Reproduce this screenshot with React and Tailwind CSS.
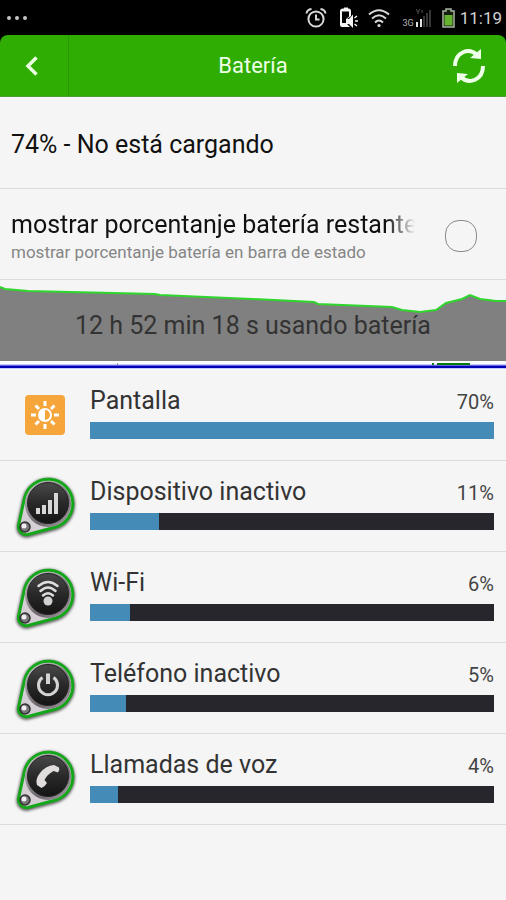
const usage = [
  { name: "Pantalla", percent: 70, fill: 100, icon: "screen" },
  { name: "Dispositivo inactivo", percent: 11, fill: 17, icon: "signal" },
  { name: "Wi-Fi", percent: 6, fill: 10, icon: "wifi" },
  { name: "Teléfono inactivo", percent: 5, fill: 9, icon: "power" },
  { name: "Llamadas de voz", percent: 4, fill: 7, icon: "phone" },
];

const StatusBar = () => {
  return (
    <div className="flex items-center justify-between h-[35px] pl-[7px] pr-1 bg-black">
      <div className="flex gap-1">
        <span className="w-1 h-1 rounded-full bg-[#c4c4c4]"></span>
        <span className="w-1 h-1 rounded-full bg-[#c4c4c4]"></span>
        <span className="w-1 h-1 rounded-full bg-[#c4c4c4]"></span>
      </div>
      <div className="flex items-center">
        {/* Alarm */}
        <svg className="mr-3" width="22" height="22" viewBox="0 0 22 22" fill="none" stroke="#d8d8d8" strokeWidth="2">
          <circle cx="11" cy="12" r="7.6" />
          <path d="M11 7.5V12.5H14.5" />
          <path d="M1.5 6.5Q2 2.5 6.5 2M20.5 6.5Q20 2.5 15.5 2" />
        </svg>
        {/* Phone with sound */}
        <svg className="mr-[9px]" width="20" height="22" viewBox="0 0 20 22">
          <path d="M4 1.5H5V0.5H9V1.5H10Q12 1.5 12 4V9L8 12V17L11 20H3Q1 20 1 18V4Q1 1.5 4 1.5Z" fill="#f4f4f4" />
          <path d="M3 4.5H10V9.5L7 12V16H3Z" fill="#000" />
          <path d="M7 12H10L14 7.5V21L10 17H7Z" fill="#f4f4f4" />
          <path d="M15.5 11L18 9M16 14H19M15.5 17L18 19" stroke="#f4f4f4" strokeWidth="1.5" />
        </svg>
        {/* Wifi */}
        <svg className="mr-3" width="22" height="20" viewBox="0 0 22 20" fill="none" stroke="#d8d8d8" strokeWidth="2">
          <path d="M1 6.5Q11 -2 21 6.5" />
          <path d="M4 10.5Q11 4 18 10.5" />
          <path d="M7 14.5Q11 10.5 15 14.5" />
          <circle cx="11" cy="17.5" r="1.6" fill="#d8d8d8" stroke="none" />
        </svg>
        {/* Mobile signal */}
        <div className="flex items-end h-5 mr-[10px]">
          <span className="text-[9px] leading-[9px] text-[#b5b5b5]">3G</span>
          <svg width="18" height="20" viewBox="0 0 18 20">
            <path d="M2 1L4 4L6 1M4 4V6M8 2V5" stroke="#555" fill="none" />
            <path d="M2 14H4V19H2ZM6 11H8V19H6Z" fill="#e4e4e4" />
            <path d="M9 8H11V19H9ZM12 5H14V19H12ZM15 2H17V19H15Z" fill="#363636" />
          </svg>
        </div>
        {/* Battery */}
        <svg className="mr-[5px]" width="13" height="20" viewBox="0 0 13 20">
          <path d="M4 3V1H9V3H12V19H1V3Z" fill="#172010" stroke="#a9b5a1" strokeWidth="1.5" />
          <path d="M2.5 7H10.5V17.5H2.5Z" fill="#65b231" />
        </svg>
        <span className="text-[17px] leading-5 text-[#d0d0d0]">11:19</span>
      </div>
    </div>
  );
};

const Header = () => {
  return (
    <div className="bg-black">
      <header className="grid grid-cols-[69px_1fr_69px] h-[62px] rounded-t-lg bg-[#2fad02] border-b border-[#4f9d35]">
        <button
          type="button"
          aria-label="Atrás"
          className="flex items-center justify-center pr-1 border-r border-[#289702]"
        >
          <svg width="14" height="20" viewBox="0 0 14 20" fill="none" stroke="#e9ffe1" strokeWidth="3.5">
            <path d="M11.5 1.5L3 10L11.5 18.5" />
          </svg>
        </button>
        <h1 className="self-center text-center text-[22px] leading-7 text-[#edffe7]">
          Batería
        </h1>
        <button type="button" aria-label="Actualizar" className="flex items-center justify-center pr-[6px]">
          <svg width="34" height="36" viewBox="0 0 34 36">
            <path d="M3 18C3 4 17 -1 25 7" fill="none" stroke="#edffe7" strokeWidth="4" />
            <path d="M29 1V11L18 10Z" fill="#edffe7" />
            <path d="M31 18C31 32 17 37 9 29" fill="none" stroke="#edffe7" strokeWidth="4" />
            <path d="M5 35V25L16 26Z" fill="#edffe7" />
          </svg>
        </button>
      </header>
    </div>
  );
};

const BatteryChart = () => {
  return (
    <div className="grid h-[90px]">
      <svg className="col-start-1 row-start-1 w-full h-[90px]" viewBox="0 0 506 90" preserveAspectRatio="none">
        <path
          d="M0 7L5 9L28 11L155 14L160 15L252 19L314 22L318 24L392 27L402 30L420 32L436 30L446 23L462 19L470 15L480 19L496 21H506V81H0Z"
          fill="#808080"
        />
        <path
          d="M0 7L5 9L28 11L155 14L160 15L252 19L314 22L318 24L392 27L402 30L420 32L436 30L446 23L462 19L470 15L480 19L496 21H506"
          fill="none"
          stroke="#2fd62d"
          strokeWidth="2"
        />
        <path d="M0 81H506V90H0Z" fill="#fbfbfb" />
        <path d="M0 84H506V89H0Z" fill="#c4c4ff" />
        <path d="M117 83H118V85H117Z" fill="#999" />
        <path d="M432 83H434V85H432ZM437 83H470V85H437Z" fill="#087a12" />
        <path d="M0 85.500H506V88H0Z" fill="#0000b5" />
      </svg>
      <p className="col-start-1 row-start-1 self-center justify-self-center pt-[2px] text-[25px] leading-8 text-[#333]">
        12 h 52 min 18 s usando batería
      </p>
    </div>
  );
};

const ScreenIcon = () => {
  return (
    <svg width="60" height="64" viewBox="0 0 60 64">
      <rect x="9" y="12" width="40" height="40" rx="4" fill="#f5a53a" />
      <path
        d="M29 18V23M29 41V46M15 32H20M38 32H43M19.500 22.500L23 26M35 38L38.500 41.500M38.500 22.500L35 26M23 38L19.500 41.500"
        stroke="#fff"
        strokeWidth="3"
      />
      <circle cx="29" cy="32" r="6" fill="#f5a53a" stroke="#fff" strokeWidth="2" />
      <path d="M29 26A6 6 0 0 0 29 38Z" fill="#fff" />
    </svg>
  );
};

const glyphs = {
  signal: (
    <path d="M20 34H24V40H20ZM26 31H30V40H26ZM32 26H36V40H32ZM38 19H42V40H38Z" fill="#d7d7d7" />
  ),
  wifi: (
    <g fill="none" stroke="#dedede" strokeWidth="2.5" strokeLinecap="round">
      <path d="M22.5 21Q32 13 41.5 21M24.5 26Q32 19 39.500 26M27 30.500Q32 26 37 30.500" />
      <circle cx="32" cy="36" r="4.5" fill="#d2d2d2" stroke="none" />
    </g>
  ),
  power: (
    <g fill="none" stroke="#d4d4d4" strokeWidth="3">
      <path d="M26.500 21.500A9.500 9.500 0 1 0 37.500 21.500" />
      <path d="M32 17.500V28" strokeWidth="4" />
    </g>
  ),
  phone: (
    <path
      d="M38 18L43 20.500Q44 22.500 42 25.500L37.500 24Q31 27.500 28.500 33L31 36Q29 39.500 25.500 41L21 38Q19 32 24 26Q30 18.500 38 18Z"
      fill="#e2dddd"
    />
  ),
};

/* Dark round button inside a green drop, with a small stud at its tip */
const BadgeIcon = ({ type }) => {
  const drop =
    "M8.5 24A24.500 24.500 0 1 1 38 53.500L12 60.500A8 8 0 0 1 2.500 51.500Z";

  return (
    <svg className="overflow-visible" width="60" height="64" viewBox="0 0 60 64">
      <defs>
        <linearGradient id={`disc-${type}`} x1="0" y1="0" x2="0" y2="1">
          <stop offset="0" stopColor="#4a4a4a" />
          <stop offset="0.5" stopColor="#292929" />
          <stop offset="1" stopColor="#141414" />
        </linearGradient>
        <linearGradient id={`rim-${type}`} x1="0" y1="0" x2="1" y2="1">
          <stop offset="0" stopColor="#c4c4c4" />
          <stop offset="0.6" stopColor="#6c656c" />
          <stop offset="1" stopColor="#aaa2aa" />
        </linearGradient>
        <filter id={`shade-${type}`} x="-20%" y="-20%" width="140%" height="140%">
          <feGaussianBlur stdDeviation="1.5" />
        </filter>
      </defs>
      <path d={drop} transform="translate(0 1)" fill="none" stroke="#555" strokeWidth="4" filter={`url(#shade-${type})`} />
      <path d={drop} fill="#d5cfd5" stroke="#13a719" strokeWidth="3" />
      <circle cx="32" cy="30" r="23" fill={`url(#rim-${type})`} />
      <circle cx="32" cy="29" r="20.5" fill={`url(#disc-${type})`} stroke="#252525" />
      <circle cx="9" cy="53" r="5" fill="#777" stroke="#303030" strokeWidth="1.5" />
      <circle cx="8" cy="52" r="2.5" fill="#f3eef3" />
      {glyphs[type]}
    </svg>
  );
};

const UsageRow = ({ item }) => {
  return (
    <li className="flex h-[91px] pl-4 pr-3 gap-[14px] border-b border-[#dcdcdc]">
      <div className="shrink-0 pt-[13px]">
        {item.icon === "screen" ? <ScreenIcon /> : <BadgeIcon type={item.icon} />}
      </div>
      <div className="flex-1 pt-[15px]">
        <div className="flex items-baseline justify-between h-[37px]">
          <span className="text-[25px] leading-8 text-[#333]">{item.name}</span>
          <span className="text-[20px] leading-8 text-[#444]">{item.percent}%</span>
        </div>
        <div className="h-[17px] bg-[#26262c]">
          <div className="h-full bg-[#448cb7]" style={{ width: `${item.fill}%` }}></div>
        </div>
      </div>
    </li>
  );
};

const App = () => {
  return (
    <div className="min-h-screen bg-[#f5f5f5] font-[Roboto,sans-serif]">
      <StatusBar />
      <Header />
      <main>
        <p className="flex items-center h-[92px] pl-[11px] pt-1 text-[25px] leading-8 text-[#111] border-b border-[#dcdcdc]">
          74% - No está cargando
        </p>
        <div className="flex items-center justify-between h-[91px] pl-[11px] pr-[29px] pt-1 border-b border-[#dcdcdc]">
          <label htmlFor="show-percent" className="w-[404px] min-w-0">
            <span className="block overflow-hidden whitespace-nowrap text-[25px] leading-8 text-[#111] mask-r-from-[376px] mask-r-to-[404px]">
              mostrar porcentanje batería restante
            </span>
            <span className="block text-[17px] leading-[22px] text-[#858585]">
              mostrar porcentanje batería en barra de estado
            </span>
          </label>
          <input
            id="show-percent"
            type="checkbox"
            className="shrink-0 appearance-none w-8 h-8 rounded-[14px] border border-[#8a8a8a] checked:bg-[#2fad02]"
          />
        </div>
        <BatteryChart />
        <ul>
          {usage.map((item) => (
            <UsageRow key={item.name} item={item} />
          ))}
        </ul>
      </main>
    </div>
  );
};

export default App;
